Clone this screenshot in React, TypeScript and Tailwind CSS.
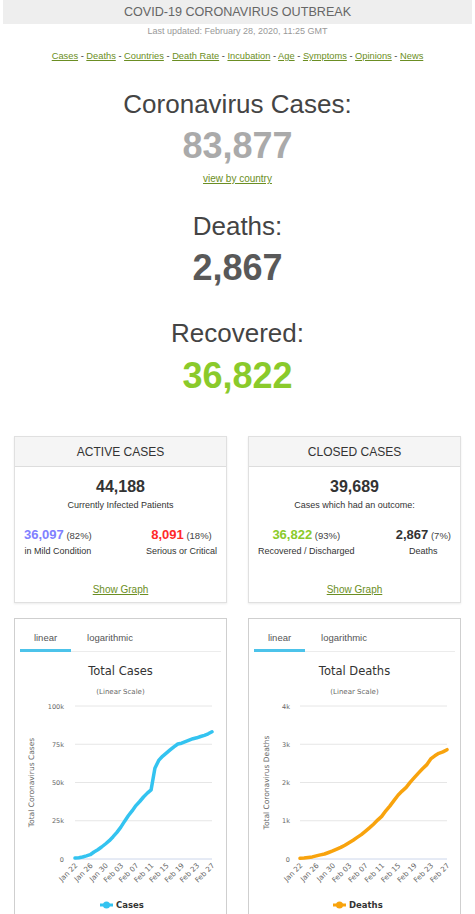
import React from 'react';

const cases = [
    580, 845, 1317, 2015, 2800, 4581, 6058, 7813, 9823, 11950, 14553, 17391, 20630, 24545, 28266, 31439, 34876, 37552,
    40553, 43099, 45134, 59287, 64438, 67100, 69197, 71329, 73332, 75184, 75700, 76677, 77673, 78651, 79205, 80087,
    80828, 81820, 83112,
];
const deaths = [
    17, 25, 41, 56, 80, 106, 132, 170, 213, 259, 304, 362, 426, 492, 565, 638, 724, 813, 910, 1018, 1115, 1261, 1383,
    1526, 1669, 1775, 1873, 2009, 2126, 2247, 2360, 2460, 2618, 2699, 2763, 2800, 2858,
];
const ticks = ['Jan 22', 'Jan 26', 'Jan 30', 'Feb 03', 'Feb 07', 'Feb 11', 'Feb 15', 'Feb 19', 'Feb 23', 'Feb 27'];
const navLinks = ['Cases', 'Deaths', 'Countries', 'Death Rate', 'Incubation', 'Age', 'Symptoms', 'Opinions', 'News'];

const chartFont = '"DejaVu Sans", Verdana, sans-serif';

interface ChartProps {
    title: string;
    axisTitle: string;
    legend: string;
    color: string;
    data: number[];
    max: number;
    yLabels: string[];
    left: number;
    right: number;
    labelX: number;
    axisX: number;
    legendX: number;
}

const Chart: React.FC<ChartProps> = ({ title, axisTitle, legend, color, data, max, yLabels, left, right, labelX, axisX, legendX }) => {
    const top = 54;
    const bottom = 207;
    const step = (right - left) / (data.length - 1);
    const points = data.map((v, i) => `${(left + i * step).toFixed(1)},${(bottom - (v / max) * (bottom - top)).toFixed(1)}`).join(' ');

    return (
        <div className="border border-[#cfcfcf] bg-white h-[320px] font-['Liberation_Sans',Arial,sans-serif]">
            {/* Tabs */}
            <div className="mx-[5px] flex border-b border-[#ececec] text-[9.5px] text-[#555]">
                <div className="w-[51px] pt-[13px] pb-[5px] leading-[12px] text-center border-b-[3px] border-[#4cc3ea] -mb-[1px]">linear</div>
                <div className="w-[78px] pt-[13px] pb-[5px] leading-[12px] text-center">logarithmic</div>
            </div>

            <svg width="211" height="270" className="block" style={{ fontFamily: chartFont }}>
                <text x="105.5" y="23" textAnchor="middle" fontSize="11.5" fill="#333">{title}</text>
                <text x="105.5" y="42" textAnchor="middle" fontSize="7" fill="#666">(Linear Scale)</text>

                {yLabels.map((l, i) => {
                    const y = top + i * ((bottom - top) / (yLabels.length - 1));
                    return (
                        <g key={l}>
                            <line x1={left} x2={right} y1={y} y2={y} stroke={i === yLabels.length - 1 ? '#ccd6eb' : '#e6e6e6'} strokeWidth="1" />
                            <text x={labelX} y={y + 2.5} textAnchor="end" fontSize="6.5" fill="#666">{l}</text>
                        </g>
                    );
                })}

                <text transform={`translate(${axisX},130.5) rotate(-90)`} textAnchor="middle" fontSize="7.5" fill="#666">
                    {axisTitle}
                </text>

                <polyline points={points} fill="none" stroke={color} strokeWidth="3.5" strokeLinejoin="round" strokeLinecap="round" />

                {ticks.map((t, i) => {
                    const x = left + i * 4 * step + 3;
                    return (
                        <text key={t} transform={`translate(${x.toFixed(1)},214) rotate(-45)`} textAnchor="end" fontSize="7.2" fill="#666">
                            {t}
                        </text>
                    );
                })}

                {/* Legend */}
                <line x1={legendX} x2={legendX + 13} y1="253" y2="253" stroke={color} strokeWidth="3" />
                <circle cx={legendX + 6.5} cy="253" r="3.5" fill={color} />
                <text x={legendX + 16} y="256" fontSize="8.5" fontWeight="bold" fill="#333">{legend}</text>
            </svg>
        </div>
    );
};

const StatCard: React.FC<{
    title: string;
    total: string;
    caption: string;
    left: { value: string; pct: string; label: string; color: string };
    right: { value: string; pct: string; label: string; color: string };
}> = ({ title, total, caption, left, right }) => (
    <div className="border border-[#e0e0e0] shadow-[0_1px_2px_rgba(0,0,0,0.08)] bg-white">
        <div className="h-[30px] bg-[#f5f5f5] border-b border-[#ddd] flex items-center justify-center text-[12px] text-[#333]">{title}</div>
        <div className="pt-[10px] pb-[6px] text-center">
            <div className="text-[16px] leading-[20px] font-bold text-[#333]">{total}</div>
            <div className="mt-[2px] text-[9px] leading-[12px] text-[#333]">{caption}</div>
            <div className="mt-[15px] px-[9px] flex justify-between">
                {[left, right].map((c) => (
                    <div key={c.label} className="text-center">
                        <div className="leading-[16px]">
                            <span className="text-[13px] font-bold" style={{ color: c.color }}>{c.value}</span>
                            <span className="text-[9.5px] text-[#444]"> ({c.pct})</span>
                        </div>
                        <div className="mt-[1px] text-[9px] leading-[12px] text-[#333]">{c.label}</div>
                    </div>
                ))}
            </div>
            <div className="mt-[27px] text-[10px] leading-[12px] text-[#6b8e23] underline">Show Graph</div>
        </div>
    </div>
);

export default function App() {
    return (
        <div className="w-[475px] h-[914px] overflow-hidden bg-white font-['Liberation_Sans',Arial,sans-serif]">
            <div className="mx-[3px] h-[24px] bg-[#eeeeee] flex items-center justify-center text-[12.6px] text-[#666]">
                COVID-19 CORONAVIRUS OUTBREAK
            </div>
            <div className="mt-[1px] text-center text-[9px] leading-[12px] text-[#999]">Last updated: February 28, 2020, 11:25 GMT</div>

            <div className="mt-[13px] text-center text-[9.3px] leading-[12px] text-[#333]">
                {navLinks.map((l, i) => (
                    <React.Fragment key={l}>
                        {i > 0 && ' - '}
                        <span className="text-[#6b8e23] underline">{l}</span>
                    </React.Fragment>
                ))}
            </div>

            {/* Main counters */}
            <div className="text-center">
                <div className="mt-[27px] text-[26px] leading-[30px] text-[#444]">Coronavirus Cases:</div>
                <div className="mt-[7px] text-[36px] leading-[40px] font-bold text-[#aaa]">83,877</div>
                <div className="mt-[7px] text-[10px] leading-[12px] text-[#6b8e23] underline">view by country</div>
                <div className="mt-[26px] text-[26px] leading-[30px] text-[#444]">Deaths:</div>
                <div className="mt-[7px] text-[36px] leading-[40px] font-bold text-[#595959]">2,867</div>
                <div className="mt-[30px] text-[26px] leading-[30px] text-[#444]">Recovered:</div>
                <div className="mt-[8px] text-[36px] leading-[40px] font-bold text-[#8aca2b]">36,822</div>
            </div>

            <div className="mt-[40px] px-[14px] grid grid-cols-2 gap-x-[21px] gap-y-[15px]">
                <StatCard
                    title="ACTIVE CASES"
                    total="44,188"
                    caption="Currently Infected Patients"
                    left={{ value: '36,097', pct: '82%', label: 'in Mild Condition', color: '#8080ff' }}
                    right={{ value: '8,091', pct: '18%', label: 'Serious or Critical', color: '#ff2a2a' }}
                />
                <StatCard
                    title="CLOSED CASES"
                    total="39,689"
                    caption="Cases which had an outcome:"
                    left={{ value: '36,822', pct: '93%', label: 'Recovered / Discharged', color: '#8aca2b' }}
                    right={{ value: '2,867', pct: '7%', label: 'Deaths', color: '#333' }}
                />
                <Chart
                    title="Total Cases"
                    axisTitle="Total Coronavirus Cases"
                    legend="Cases"
                    color="#33c3f0"
                    data={cases}
                    max={100000}
                    yLabels={['100k', '75k', '50k', '25k', '0']}
                    left={60}
                    right={197}
                    labelX={49}
                    axisX={19}
                    legendX={85}
                />
                <Chart
                    title="Total Deaths"
                    axisTitle="Total Coronavirus Deaths"
                    legend="Deaths"
                    color="#f8a30d"
                    data={deaths}
                    max={4000}
                    yLabels={['4k', '3k', '2k', '1k', '0']}
                    left={51}
                    right={198}
                    labelX={41}
                    axisX={20}
                    legendX={84}
                />
            </div>
        </div>
    );
}
